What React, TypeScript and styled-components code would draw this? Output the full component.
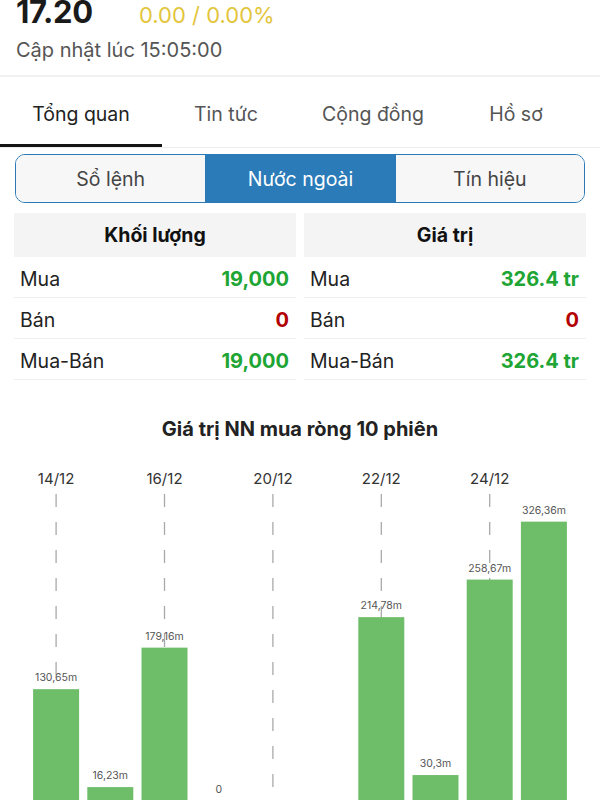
import React from "react";
import styled, { createGlobalStyle } from "styled-components";

const GlobalStyle = createGlobalStyle`
  *, *::before, *::after { box-sizing: border-box; }
  html, body { margin: 0; padding: 0; background: #ffffff; }
  body {
    font-family: Inter, "Liberation Sans", "Noto Sans", sans-serif;
    -webkit-font-smoothing: antialiased;
  }
`;

const Page = styled.div`
  width: 600px;
  height: 800px;
  overflow: hidden;
  background: #fff;
`;

const Header = styled.header`
  padding: 0 16px 13px;
  border-bottom: 2px solid #f1f1f1;
`;

const PriceRow = styled.div`
  display: flex;
  align-items: baseline;
  line-height: 24px;
`;

const Price = styled.span`
  width: 123px;
  font-size: 31px;
  line-height: 24px;
  font-weight: 700;
  color: #1a1a1a;
  letter-spacing: -0.3px;
`;

const Change = styled.span`
  font-size: 22px;
  line-height: 24px;
  color: #e3c53c;
`;

const UpdateTime = styled.div`
  margin-top: 11px;
  font-size: 20px;
  line-height: 24px;
  color: #555;
`;

const TabBar = styled.nav`
  display: grid;
  grid-template-columns: 162px 128px 166px 120px;
  border-bottom: 1px solid #ededed;
`;

const Tab = styled.div<{ $active?: boolean }>`
  height: 70px;
  padding-top: 3px;
  display: flex;
  align-items: center;
  justify-content: center;
  font-size: 19.5px;
  color: ${(p) => (p.$active ? "#222" : "#555")};
  box-shadow: ${(p) => (p.$active ? "inset 0 -3px 0 #151515" : "none")};
`;

const Segmented = styled.div`
  margin: 6px 15px 0;
  height: 49px;
  border: 1.5px solid #2a79b6;
  border-radius: 10px;
  overflow: hidden;
  display: grid;
  grid-template-columns: 1fr 1fr 1fr;
`;

const SegmentButton = styled.div<{ $active?: boolean }>`
  display: flex;
  align-items: center;
  justify-content: center;
  font-size: 19.5px;
  background: ${(p) => (p.$active ? "#2b7bb9" : "#f7f7f7")};
  color: ${(p) => (p.$active ? "#ffffff" : "#444")};
  & + & {
    border-left: 1px solid #2a79b6;
  }
`;

const Tables = styled.div`
  margin: 10px 14px 0;
  display: grid;
  grid-template-columns: 1fr 1fr;
  gap: 8px;
`;

const Panel = styled.div`
  display: flex;
  flex-direction: column;
`;

const PanelHeader = styled.div`
  height: 44px;
  display: flex;
  align-items: center;
  justify-content: center;
  background: #f4f4f4;
  font-size: 19.5px;
  font-weight: 700;
  color: #111;
`;

const Row = styled.div`
  height: 41px;
  display: flex;
  align-items: center;
  justify-content: space-between;
  padding: 4px 7px 0 6px;
  border-bottom: 1px solid #efefef;
`;

const RowLabel = styled.span`
  font-size: 19.5px;
  color: #222;
`;

const RowValue = styled.span<{ $tone: "up" | "down" }>`
  font-size: 20px;
  font-weight: 700;
  color: ${(p) => (p.$tone === "up" ? "#20a534" : "#b30000")};
`;

const ChartTitle = styled.h2`
  margin: 37px 0 0;
  text-align: center;
  font-size: 20px;
  line-height: 24px;
  font-weight: 700;
  color: #222;
`;

const ChartSvg = styled.svg`
  display: block;
`;

type Stat = { label: string; value: string; tone: "up" | "down" };

const volume: Stat[] = [
  { label: "Mua", value: "19,000", tone: "up" },
  { label: "Bán", value: "0", tone: "down" },
  { label: "Mua-Bán", value: "19,000", tone: "up" },
];

const valueStats: Stat[] = [
  { label: "Mua", value: "326.4 tr", tone: "up" },
  { label: "Bán", value: "0", tone: "down" },
  { label: "Mua-Bán", value: "326.4 tr", tone: "up" },
];

type Bar = { value: number | null; label?: string; date?: string };

const bars: Bar[] = [
  { value: 130.65, label: "130,65m", date: "14/12" },
  { value: 16.23, label: "16,23m" },
  { value: 179.16, label: "179,16m", date: "16/12" },
  { value: 0, label: "0" },
  { value: null, date: "20/12" },
  { value: null },
  { value: 214.78, label: "214,78m", date: "22/12" },
  { value: 30.3, label: "30,3m" },
  { value: 258.67, label: "258,67m", date: "24/12" },
  { value: 326.36, label: "326,36m" },
];

const CHART_H = 365;
const BASE = 360;
const SCALE = 0.856;
const SLOT_X = 29;
const SLOT_W = 54.2;
const BAR_W = 46;
const DATE_Y = 43;
const DASH_TOP = 53;

function Chart() {
  return (
    <ChartSvg width={600} height={CHART_H} viewBox={`0 0 600 ${CHART_H}`}>
      {bars.map((b, i) =>
        b.date ? (
          <g key={`d${i}`}>
            <text
              x={SLOT_X + SLOT_W * i + SLOT_W / 2}
              y={DATE_Y}
              textAnchor="middle"
              fontSize={15}
              fill="#333"
              fontFamily="Inter, 'Liberation Sans', sans-serif"
            >
              {b.date}
            </text>
            <line
              x1={SLOT_X + SLOT_W * i + SLOT_W / 2}
              x2={SLOT_X + SLOT_W * i + SLOT_W / 2}
              y1={DASH_TOP}
              y2={BASE}
              stroke="#a9a9a9"
              strokeWidth={1.3}
              strokeDasharray="13 15"
            />
          </g>
        ) : null
      )}
      {bars.map((b, i) => {
        if (b.value === null) return null;
        const cx = SLOT_X + SLOT_W * i + SLOT_W / 2;
        const h = b.value * SCALE;
        const top = BASE - h;
        return (
          <g key={`b${i}`}>
            {h > 0 && (
              <rect x={cx - BAR_W / 2} y={top} width={BAR_W} height={h} fill="#6dbd69" />
            )}
            <text
              x={cx}
              y={top - 8}
              textAnchor="middle"
              fontSize={10.5}
              fill="#555"
              fontFamily="Inter, 'Liberation Sans', sans-serif"
            >
              {b.label}
            </text>
          </g>
        );
      })}
    </ChartSvg>
  );
}

function StatPanel({ title, rows }: { title: string; rows: Stat[] }) {
  return (
    <Panel>
      <PanelHeader>{title}</PanelHeader>
      {rows.map((r) => (
        <Row key={r.label}>
          <RowLabel>{r.label}</RowLabel>
          <RowValue $tone={r.tone}>{r.value}</RowValue>
        </Row>
      ))}
    </Panel>
  );
}

export default function App() {
  return (
    <Page>
      <GlobalStyle />
      <Header>
        <PriceRow>
          <Price>17.20</Price>
          <Change>0.00 / 0.00%</Change>
        </PriceRow>
        <UpdateTime>Cập nhật lúc 15:05:00</UpdateTime>
      </Header>
      <TabBar>
        <Tab $active>Tổng quan</Tab>
        <Tab>Tin tức</Tab>
        <Tab>Cộng đồng</Tab>
        <Tab>Hồ sơ</Tab>
      </TabBar>
      <Segmented>
        <SegmentButton>Sổ lệnh</SegmentButton>
        <SegmentButton $active>Nước ngoài</SegmentButton>
        <SegmentButton>Tín hiệu</SegmentButton>
      </Segmented>
      <Tables>
        <StatPanel title="Khối lượng" rows={volume} />
        <StatPanel title="Giá trị" rows={valueStats} />
      </Tables>
      <ChartTitle>Giá trị NN mua ròng 10 phiên</ChartTitle>
      <Chart />
    </Page>
  );
}
